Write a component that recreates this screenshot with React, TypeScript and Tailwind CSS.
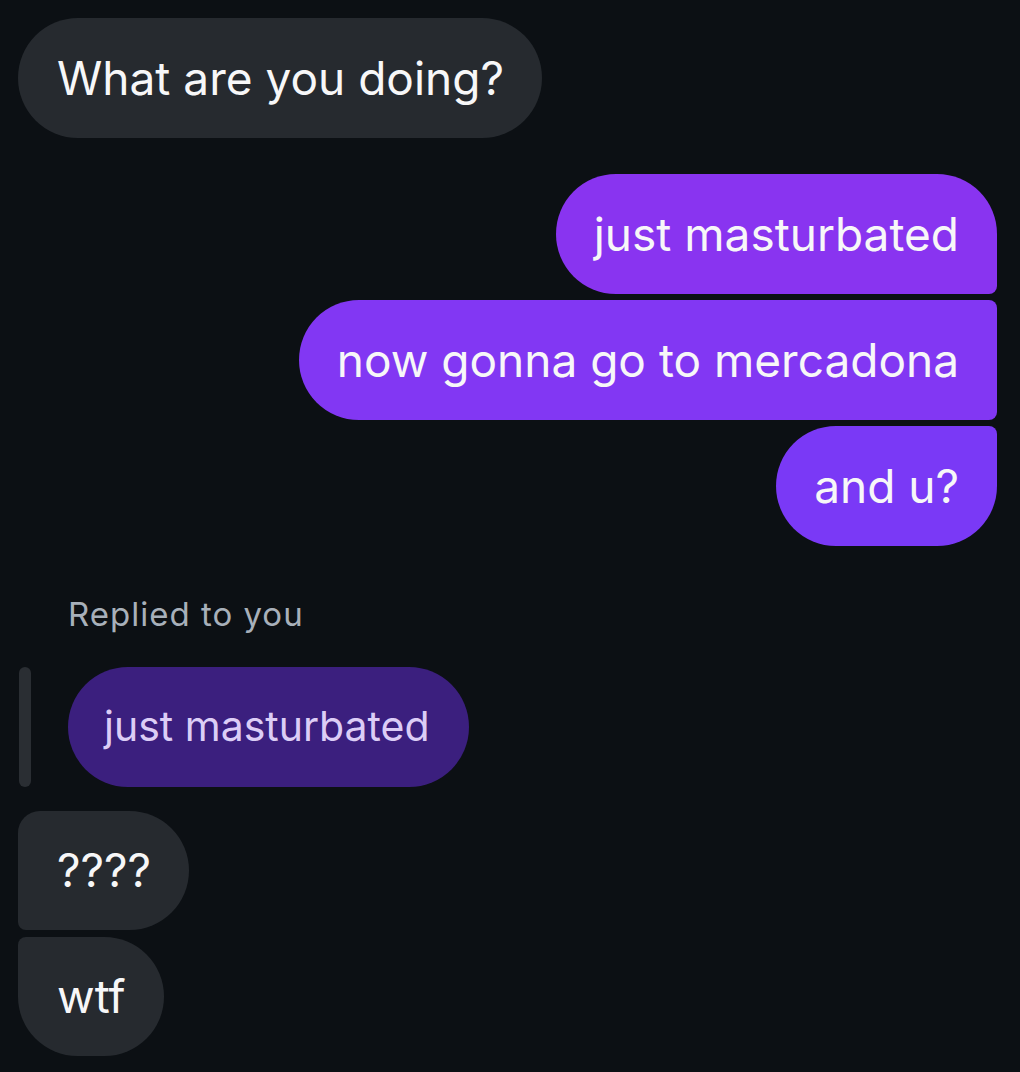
export default function App() {
  return (
    <div
      className="w-[1020px] h-[1072px] overflow-hidden bg-[#0c1014] text-[#f7f7f8] pt-[18px] pl-[18px] pr-[23px]"
      style={{ fontFamily: "Inter, 'Open Sans', sans-serif" }}
    >
      {/* incoming */}
      <div className="flex">
        <div className="h-[120px] flex items-center pl-[39px] pr-[38px] rounded-full bg-[#262a2f] text-[46px]">
          What are you doing?
        </div>
      </div>

      {/* outgoing group */}
      <div className="mt-[36px] flex flex-col items-end gap-[6px]">
        <div className="h-[120px] flex items-center px-[38px] bg-[#8934f0] text-[46px] rounded-[60px] rounded-br-[8px]">
          just masturbated
        </div>
        <div className="h-[120px] flex items-center px-[38px] bg-[#8237f3] text-[46px] rounded-l-[60px] rounded-r-[8px]">
          now gonna go to mercadona
        </div>
        <div className="h-[120px] flex items-center px-[38px] bg-[#7a39f6] text-[46px] rounded-[60px] rounded-tr-[8px]">
          and u?
        </div>
      </div>

      {/* reply */}
      <div className="mt-[46px] pl-[50px] text-[33px] tracking-[1px] text-[#a8b0ba] leading-[44px]">
        Replied to you
      </div>
      <div className="mt-[31px] flex items-stretch gap-[37px]">
        <div className="w-[12px] ml-[1px] rounded-full bg-[#2a2e33]" />
        <div className="h-[120px] flex items-center pl-[36px] pr-[39px] rounded-full bg-[#3b1f7e] text-[#dccdf6] text-[41px]">
          just masturbated
        </div>
      </div>

      {/* incoming group */}
      <div className="mt-[24px] flex flex-col items-start gap-[7px]">
        <div className="h-[119px] flex items-center pl-[39px] pr-[38px] bg-[#262a2f] text-[46px] rounded-[60px] rounded-tl-[22px] rounded-bl-[8px]">
          ????
        </div>
        <div className="h-[119px] flex items-center pl-[39px] pr-[38px] bg-[#262a2f] text-[46px] rounded-[60px] rounded-tl-[8px]">
          wtf
        </div>
      </div>
    </div>
  );
}
